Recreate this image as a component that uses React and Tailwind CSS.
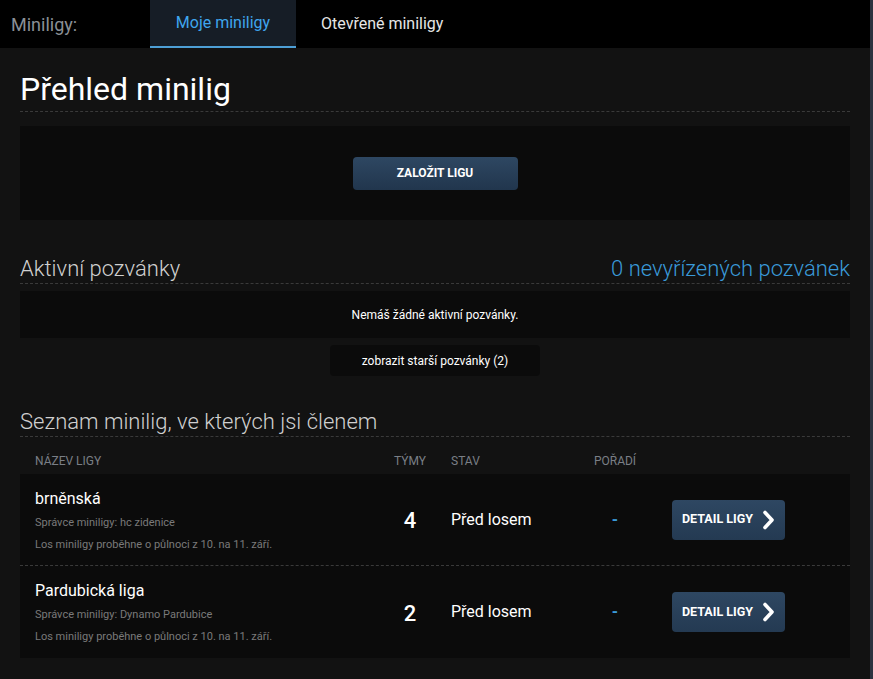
import React from "react";

function Chevron() {
  return (
    <svg width="13" height="20" viewBox="0 0 13 20" className="ml-[9px]">
      <path d="M3 2.5 L10 10 L3 17.5" fill="none" stroke="#fff" strokeWidth="3.6" strokeLinecap="round" strokeLinejoin="round" />
    </svg>
  );
}

function Row({ name, admin, teams, last }) {
  return (
    <div className={`grid grid-cols-[355px_70px_148px_44px_1fr] items-center bg-[#0b0b0b] h-[92px] ${last ? "" : "border-b border-dashed border-[#3a3a3a]"}`}>
      <div className="pl-[15px] flex flex-col">
        <div className="text-[16px] text-white leading-[20px]">{name}</div>
        <div className="text-[11px] text-[#7a7a7a] leading-[13px] mt-[7px]">{admin}</div>
        <div className="text-[11px] text-[#7a7a7a] leading-[13px] mt-[9px]">Los miniligy proběhne o půlnoci z 10. na 11. září.</div>
      </div>
      <div className="text-center text-[22px] font-medium text-white pt-[2px]">{teams}</div>
      <div className="pl-[6px] text-[16px] text-white">Před losem</div>
      <div className="text-center text-[16px] font-bold text-[#3a9ad9]">-</div>
      <div className="pl-[35px]">
        <button className="h-[40px] w-[113px] rounded-[4px] bg-gradient-to-b from-[#2e4762] to-[#243a52] flex items-center justify-center text-[12.5px] font-bold text-white">
          DETAIL LIGY
          <Chevron />
        </button>
      </div>
    </div>
  );
}

export default function App() {
  return (
    <div className="w-[873px] h-[679px] flex bg-[#121212] overflow-hidden" style={{ fontFamily: "Roboto, 'Noto Sans', sans-serif" }}>
      <div className="flex-1 flex flex-col min-w-0">
        <div className="h-[48px] bg-black flex items-stretch shrink-0">
          <div className="pl-[11px] w-[150px] flex items-center text-[18px] text-[#8a8f96]">Miniligy:</div>
          <div className="w-[146px] bg-[#161d26] border-b-2 border-[#4d9fd6] flex items-center justify-center text-[16px] text-[#3fa6ee]">Moje miniligy</div>
          <div className="pl-[25px] flex items-center text-[16px] text-[#e6e6e6]">Otevřené miniligy</div>
        </div>
        <div className="px-[20px] flex flex-col">
          <div className="pt-[22px] pb-[3px] border-b border-dashed border-[#3a3a3a]">
            <h1 className="text-[32px] leading-[38px] text-white">Přehled minilig</h1>
          </div>
          <div className="mt-[14px] h-[94px] bg-[#0b0b0b] flex items-center justify-center">
            <button className="w-[165px] h-[33px] rounded-[4px] bg-gradient-to-b from-[#2e4762] to-[#21364d] text-[12px] font-bold text-white">ZALOŽIT LIGU</button>
          </div>
          <div className="mt-[35px] flex items-end justify-between border-b border-dashed border-[#3a3a3a]">
            <div className="text-[22px] font-light leading-[28px] text-[#d0d0d0]">Aktivní pozvánky</div>
            <div className="text-[22px] font-light leading-[28px] text-[#3a9ad9]">0 nevyřízených pozvánek</div>
          </div>
          <div className="mt-[7px] h-[47px] bg-[#0b0b0b] flex items-center justify-center text-[12px] text-white">Nemáš žádné aktivní pozvánky.</div>
          <div className="mt-[7px] flex justify-center">
            <button className="w-[210px] h-[31px] rounded-[4px] bg-[#0b0b0b] text-[12px] text-white">zobrazit starší pozvánky (2)</button>
          </div>
          <div className="mt-[32px] border-b border-dashed border-[#3a3a3a]">
            <div className="text-[22px] font-light leading-[28px] text-[#d0d0d0]">Seznam minilig, ve kterých jsi členem</div>
          </div>
          <div className="mt-[10px] h-[27px] grid grid-cols-[355px_70px_148px_44px_1fr] items-center text-[12px] text-[#7a7f86]">
            <div className="pl-[15px]">NÁZEV LIGY</div>
            <div className="text-center">TÝMY</div>
            <div className="pl-[6px]">STAV</div>
            <div className="text-center">POŘADÍ</div>
            <div></div>
          </div>
          <Row name="brněnská" admin="Správce miniligy: hc zidenice" teams="4" />
          <Row name="Pardubická liga" admin="Správce miniligy: Dynamo Pardubice" teams="2" last />
        </div>
      </div>
      <div className="w-[3px] bg-[#2b3340] shrink-0"></div>
    </div>
  );
}
